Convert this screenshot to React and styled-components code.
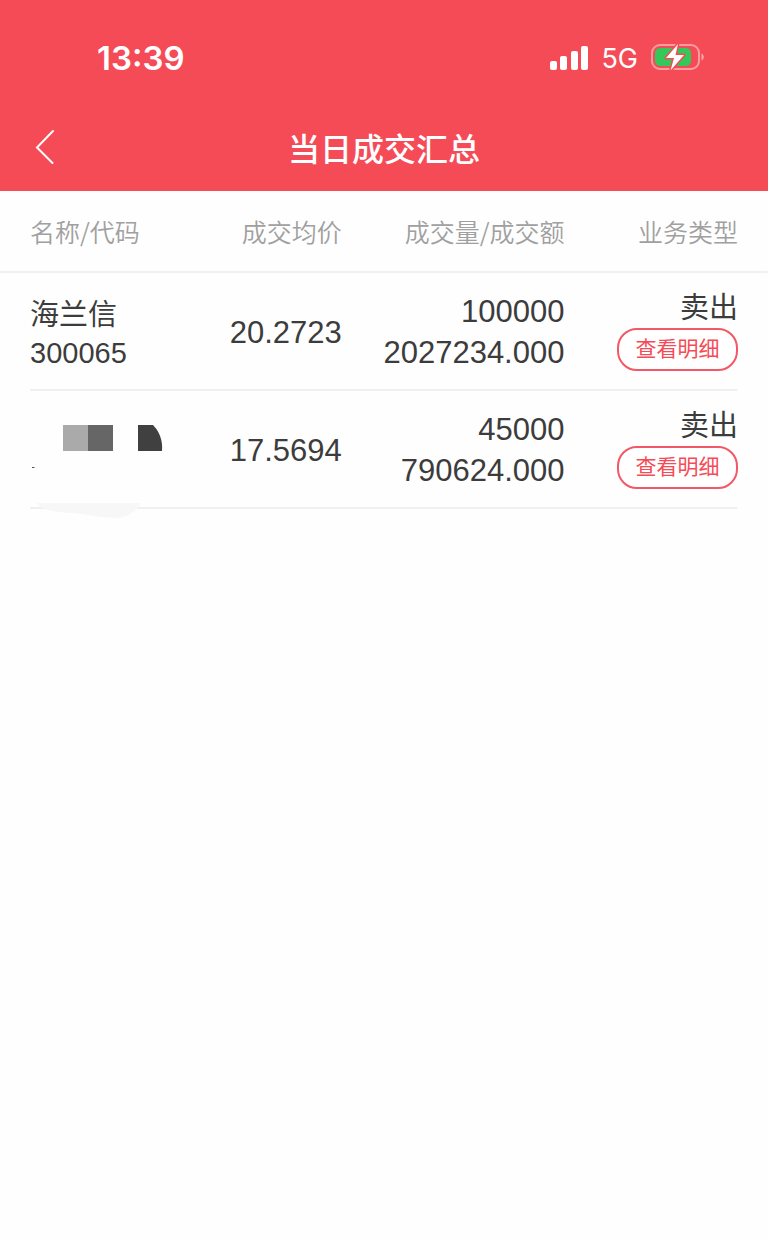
import React from "react";
import styled, { createGlobalStyle } from "styled-components";

const GlobalStyle = createGlobalStyle`
  body {
    margin: 0;
    background: #fefefe;
    color: #3c3c3c;
    font-family: "Liberation Sans", "Noto Sans CJK SC", sans-serif;
  }
`;

const Page = styled.div`
  min-height: 100vh;
`;

const Header = styled.header`
  background: #f54b57;
  color: #fff;
`;

const StatusBar = styled.div`
  display: flex;
  align-items: center;
  justify-content: space-between;
  height: 84px;
  padding: 16px 64px 0 97px;
  font-family: Inter, sans-serif;
`;

const Time = styled.time`
  font-size: 33px;
  font-weight: 600;
`;

const Indicators = styled.div`
  display: flex;
  align-items: center;
  gap: 12px;
  font-size: 27px;
`;

const NavBar = styled.nav`
  display: grid;
  grid-template-columns: 60px 1fr 60px;
  align-items: center;
  height: 89px;
  padding: 2px 15px 0;
`;

const BackButton = styled.button`
  display: flex;
  justify-content: center;
  padding: 10px;
  border: 0;
  background: none;
  color: inherit;
  cursor: pointer;
`;

const Title = styled.h1`
  margin: 0;
  font-family: "Noto Sans CJK SC", sans-serif;
  font-size: 32px;
  font-weight: 500;
  line-height: 40px;
  text-align: center;
`;

const Table = styled.table`
  width: 100%;
  table-layout: fixed;
  border-collapse: separate;
  border-spacing: 0;
  text-align: right;
`;

const Column = styled.col`
  width: ${(p) => p.$width};
`;

const Row = styled.tr`
  background: linear-gradient(#f0f0f0, #f0f0f0) bottom / calc(100% - ${(p) => p.$inset * 2}px) 2px no-repeat;
`;

const HeadCell = styled.th`
  height: 80px;
  padding: 0 0 2px;
  color: #a0a0a0;
  font-family: "Noto Sans CJK SC", sans-serif;
  font-size: 25px;
  font-weight: 350;
  line-height: 36px;
  white-space: nowrap;

  &:first-child {
    padding-left: 30px;
    text-align: left;
  }

  &:last-child {
    padding-right: 30px;
  }
`;

const Cell = styled.td`
  height: 118px;
  padding: 0;
  font-size: 31px;
  line-height: 41px;

  &:first-child {
    height: 116px;
    padding: 2px 0 0 30px;
    text-align: left;
  }

  &:last-child {
    height: 112px;
    padding: 0 30px 6px 0;
  }
`;

const Name = styled.div`
  font-size: 29px;
  line-height: 40px;
`;

const Code = styled.div`
  font-size: 29px;
  line-height: 36px;
`;

const Side = styled.div`
  font-size: 29px;
  line-height: 40px;
`;

const DetailButton = styled.button`
  display: block;
  width: 121px;
  height: 43px;
  margin-left: auto;
  padding: 0;
  border: 2px solid #f25865;
  border-radius: 20px;
  background: #fff;
  color: #f54b57;
  font-family: inherit;
  font-size: 21px;
  line-height: 30px;
  cursor: pointer;
`;

const HiddenBox = styled.div`
  position: relative;
  height: 116px;
`;

const Mask = styled.svg`
  position: absolute;
  top: 0;
  left: 0;
`;

const trades = [
  {
    name: "海兰信",
    code: "300065",
    price: "20.2723",
    volume: "100000",
    amount: "2027234.000",
    side: "卖出",
  },
  {
    hidden: true,
    price: "17.5694",
    volume: "45000",
    amount: "790624.000",
    side: "卖出",
  },
];

const SignalIcon = () => (
  <svg width="40" height="26" viewBox="0 0 40 26" fill="currentColor">
    <rect x="1" y="16" width="7" height="9" rx="2" />
    <rect x="11" y="11" width="7" height="14" rx="2" />
    <rect x="22" y="6" width="7" height="19" rx="2" />
    <rect x="32" y="1" width="7" height="24" rx="2" />
  </svg>
);

const BatteryIcon = () => (
  <svg width="54" height="30" viewBox="0 0 54 30" fill="none">
    <rect x="2" y="2" width="47" height="24" rx="8" stroke="#fff" strokeOpacity="0.45" strokeWidth="2" />
    <path d="M51.5 10.5c3 1 3 6 0 7z" fill="#fff" fillOpacity="0.5" />
    <rect x="5" y="5" width="36" height="18" rx="5" fill="#34c759" />
    <path
      d="M28 1 16 15h8l-3.5 12.5L34 12h-8.5z"
      fill="#fff"
      stroke="#f54b57"
      strokeWidth="3"
      strokeLinejoin="round"
      paintOrder="stroke"
    />
  </svg>
);

const BackIcon = () => (
  <svg width="20" height="36" viewBox="0 0 20 36" fill="none">
    <path d="M18 2 2 18.5 17.5 34" stroke="currentColor" strokeWidth="2" strokeLinecap="round" />
  </svg>
);

const HiddenName = () => (
  <HiddenBox>
    <Mask width="140" height="130" viewBox="0 0 140 130" aria-hidden="true">
      <path d="M33 32h25v26H33z" fill="#aaa" />
      <path d="M58 32h25v26H58z" fill="#666" />
      <path d="M108 32h15c6 6 10 15 9 26h-24z" fill="#404040" />
      <path d="M2 74h3l-1 1H2z" fill="#555" />
      <path d="M7 110h104c-6 10-16 15-25 15-14 0-29-4-45-5-14-1-29-2-34-10z" fill="#f7f7f7" />
    </Mask>
  </HiddenBox>
);

const TradeRow = ({ trade }) => (
  <Row $inset={30}>
    <Cell>
      {trade.hidden ? (
        <HiddenName />
      ) : (
        <>
          <Name>{trade.name}</Name>
          <Code>{trade.code}</Code>
        </>
      )}
    </Cell>
    <Cell>{trade.price}</Cell>
    <Cell>
      <div>{trade.volume}</div>
      <div>{trade.amount}</div>
    </Cell>
    <Cell>
      <Side>{trade.side}</Side>
      <DetailButton type="button">查看明细</DetailButton>
    </Cell>
  </Row>
);

const App = () => {
  return (
    <Page>
      <GlobalStyle />
      <Header>
        <StatusBar>
          <Time>13:39</Time>
          <Indicators>
            <SignalIcon />
            <span>5G</span>
            <BatteryIcon />
          </Indicators>
        </StatusBar>
        <NavBar>
          <BackButton type="button" aria-label="返回">
            <BackIcon />
          </BackButton>
          <Title>当日成交汇总</Title>
        </NavBar>
      </Header>
      <main>
        <Table>
          <colgroup>
            <Column $width="26%" />
            <Column $width="18.5%" />
            <Column $width="29%" />
            <Column $width="26.5%" />
          </colgroup>
          <thead>
            <Row $inset={0}>
              <HeadCell>名称/代码</HeadCell>
              <HeadCell>成交均价</HeadCell>
              <HeadCell>成交量/成交额</HeadCell>
              <HeadCell>业务类型</HeadCell>
            </Row>
          </thead>
          <tbody>
            {trades.map((trade) => (
              <TradeRow key={trade.amount} trade={trade} />
            ))}
          </tbody>
        </Table>
      </main>
    </Page>
  );
};

export default App;
